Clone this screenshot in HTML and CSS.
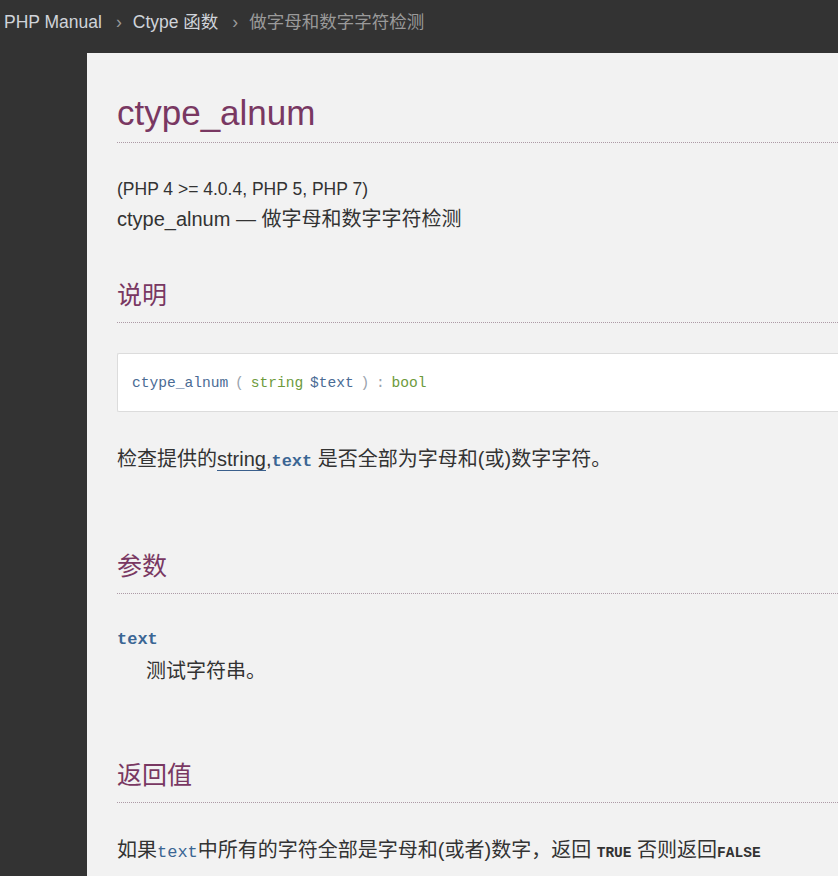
FILE: index.html
```html
<!DOCTYPE html>
<html lang="zh-CN">
<head>
<meta charset="utf-8">
<title>ctype_alnum</title>
<link rel="stylesheet" href="styles.css">
</head>
<body>
<nav class="crumbs">
  <span class="crumb">PHP Manual</span>
  <span class="sep">›</span>
  <span class="crumb">Ctype 函数</span>
  <span class="sep">›</span>
  <span class="crumb current">做字母和数字字符检测</span>
</nav>
<main class="page">
  <h1 class="title">ctype_alnum</h1>
  <p class="verinfo">(PHP 4 &gt;= 4.0.4, PHP 5, PHP 7)</p>
  <p class="refpurpose">ctype_alnum — 做字母和数字字符检测</p>

  <h2 class="section first">说明</h2>
  <div class="synopsis"><span class="fn">ctype_alnum</span> <span class="punct">(</span> <span class="type">string</span> <span class="param">$text</span> <span class="punct">)</span> <span class="punct">:</span> <span class="type">bool</span></div>
  <p class="para">检查提供的<a class="link">string</a>,<code class="pname">text</code> 是否全部为字母和(或)数字字符。</p>

  <h2 class="section">参数</h2>
  <dl class="params">
    <dt><code class="pname">text</code></dt>
    <dd>测试字符串。</dd>
  </dl>

  <h2 class="section">返回值</h2>
  <p class="para last">如果<code class="pname plain">text</code>中所有的字符全部是字母和(或者)数字，返回 <code class="const">TRUE</code> 否则返回<code class="const">FALSE</code></p>
</main>
</body>
</html>
```

FILE: styles.css
```css
html, body {
  margin: 0;
  padding: 0;
}

body {
  background: #333333;
  font-family: "Liberation Sans", "Noto Sans CJK SC", sans-serif;
  color: #333333;
  height: 876px;
  overflow: hidden;
}

.crumbs {
  display: flex;
  align-items: flex-start;
  height: 53px;
  padding-left: 4px;
  box-sizing: border-box;
  font-size: 17.5px;
  line-height: 44px;
}

.crumb {
  color: #d0d4da;
}

.crumb.current {
  color: #9a9a9a;
}

.sep {
  color: #9a9a9a;
  margin: 0 11px 0 14px;
}

.page {
  display: block;
  margin-left: 87px;
  background: #f2f2f2;
  padding: 39px 0 40px 30px;
  min-height: 900px;
}

.title {
  margin: 0;
  font-size: 35px;
  line-height: 42px;
  font-weight: normal;
  color: #793862;
  padding-bottom: 8px;
  border-bottom: 1px dotted #ad9aa6;
}

.verinfo {
  margin: 34px 0 0;
  font-size: 17.5px;
  line-height: 24px;
}

.refpurpose {
  margin: 4px 0 0;
  font-size: 20px;
  line-height: 28px;
}

.section {
  margin: 73px 0 0;
  font-size: 25px;
  line-height: 35px;
  font-weight: normal;
  color: #793862;
  padding-bottom: 9px;
  border-bottom: 1px dotted #ad9aa6;
}

.section.first {
  margin-top: 45px;
}

.synopsis {
  margin-top: 30px;
  background: #ffffff;
  border: 1px solid #dcdcdc;
  border-right: none;
  border-radius: 2px 0 0 2px;
  padding: 17px 15px 15px 14px;
  font-family: "Liberation Mono", monospace;
  font-size: 14.6px;
  line-height: 25px;
  word-spacing: -2px;
  color: #999999;
  white-space: pre;
}

.fn {
  color: #4a6b94;
}

.type {
  color: #6d9a3c;
}

.param {
  color: #4a6b94;
}

.punct {
  color: #9aa3ad;
}

.para {
  margin: 33px 0 0;
  font-size: 20px;
  line-height: 28px;
}

.para.last {
  margin-top: 33px;
}

.link {
  color: #333333;
  text-decoration: none;
  border-bottom: 1px solid #3a5f8c;
}

.pname {
  font-family: "Liberation Mono", monospace;
  font-weight: bold;
  font-size: 17px;
  color: #3b6694;
}

.pname.plain {
  font-weight: normal;
}

.const {
  font-family: "Liberation Mono", monospace;
  font-weight: bold;
  font-size: 14.5px;
  color: #333333;
}

.params {
  margin: 32px 0 0;
}

.params dt {
  font-size: 16.5px;
  line-height: 24px;
}

.params dd {
  margin: 5px 0 0 29px;
  font-size: 20px;
  line-height: 28px;
}
```
